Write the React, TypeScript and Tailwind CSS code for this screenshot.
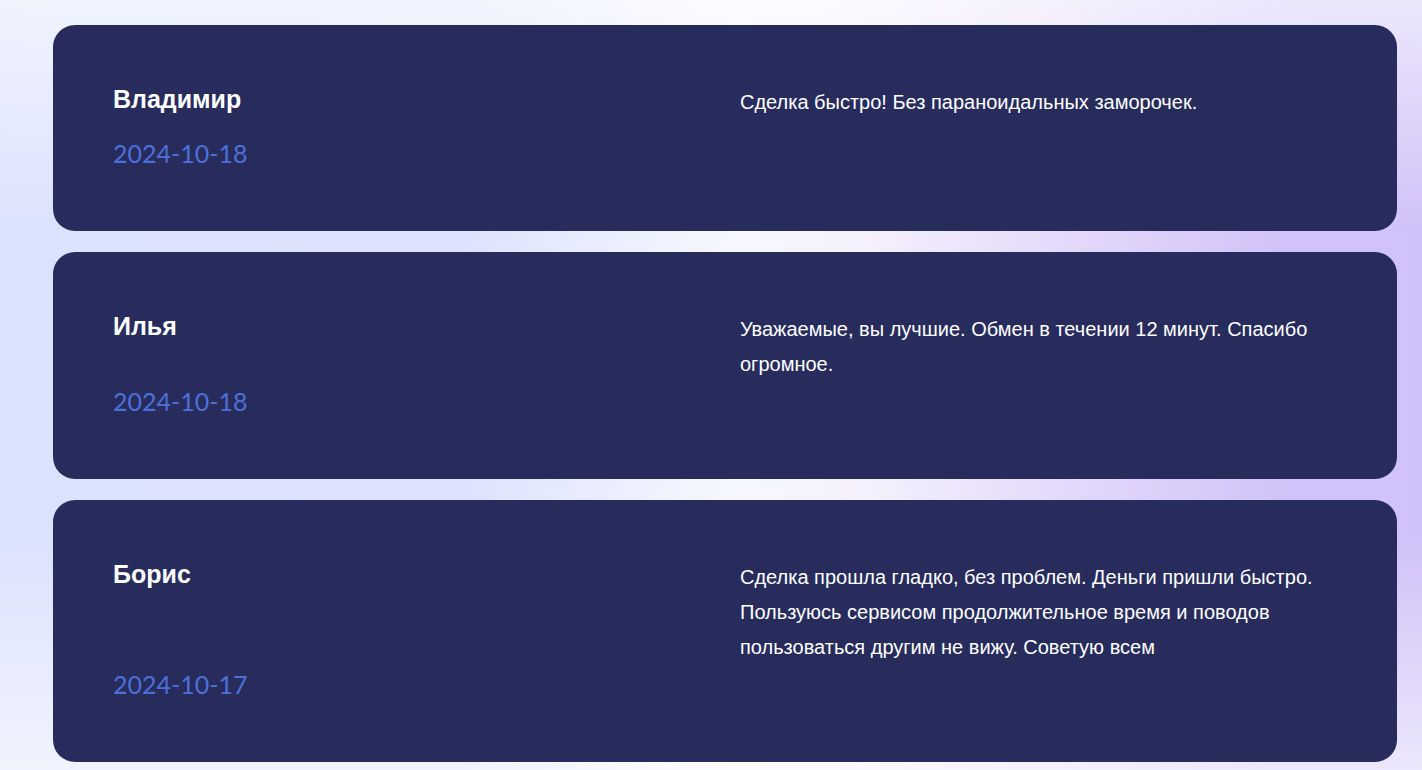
import React from 'react';

type Review = { name: string; date: string; text: string };

const reviews: Review[] = [
  { name: 'Владимир', date: '2024-10-18', text: 'Сделка быстро! Без параноидальных заморочек.' },
  { name: 'Илья', date: '2024-10-18', text: 'Уважаемые, вы лучшие. Обмен в течении 12 минут. Спасибо огромное.' },
  {
    name: 'Борис',
    date: '2024-10-17',
    text: 'Сделка прошла гладко, без проблем. Деньги пришли быстро. Пользуюсь сервисом продолжительное время и поводов пользоваться другим не вижу. Советую всем',
  },
];

function ReviewCard({ r }: { r: Review }) {
  return (
    <div className="flex rounded-[22px] bg-[#272c5d] p-[60px]">
      <div className="flex w-[627px] shrink-0 flex-col justify-between gap-[22px]">
        <div className="text-[25px] font-bold leading-[28px] text-white [font-family:'Liberation_Sans',Arial,sans-serif]">
          {r.name}
        </div>
        <div className="text-[25px] leading-[36px] text-[#4d70d8] [font-family:Lato,sans-serif]">{r.date}</div>
      </div>
      <p className="w-[597px] pb-[37px] text-[20px] leading-[35px] text-white [font-family:'Liberation_Sans',Arial,sans-serif]">
        {r.text}
      </p>
    </div>
  );
}

export default function App() {
  return (
    <div className="relative h-[770px] w-full overflow-hidden bg-[linear-gradient(to_right,#dbe2fd_0%,#dde3fd_33%,#f7f8ff_52%,#f3effd_62%,#e3d9fa_75%,#d1c3f8_90%,#d0c2f8_100%)]">
      <div className="absolute inset-0 bg-[linear-gradient(to_bottom,rgba(255,255,255,0.6)_0%,rgba(255,255,255,0)_30%,rgba(255,255,255,0)_70%,rgba(255,255,255,0.6)_100%)]" />
      <div className="relative ml-[53px] mr-[25px] flex flex-col gap-[21px] pt-[25px]">
        {reviews.map((r, i) => (
          <ReviewCard key={i} r={r} />
        ))}
      </div>
    </div>
  );
}
